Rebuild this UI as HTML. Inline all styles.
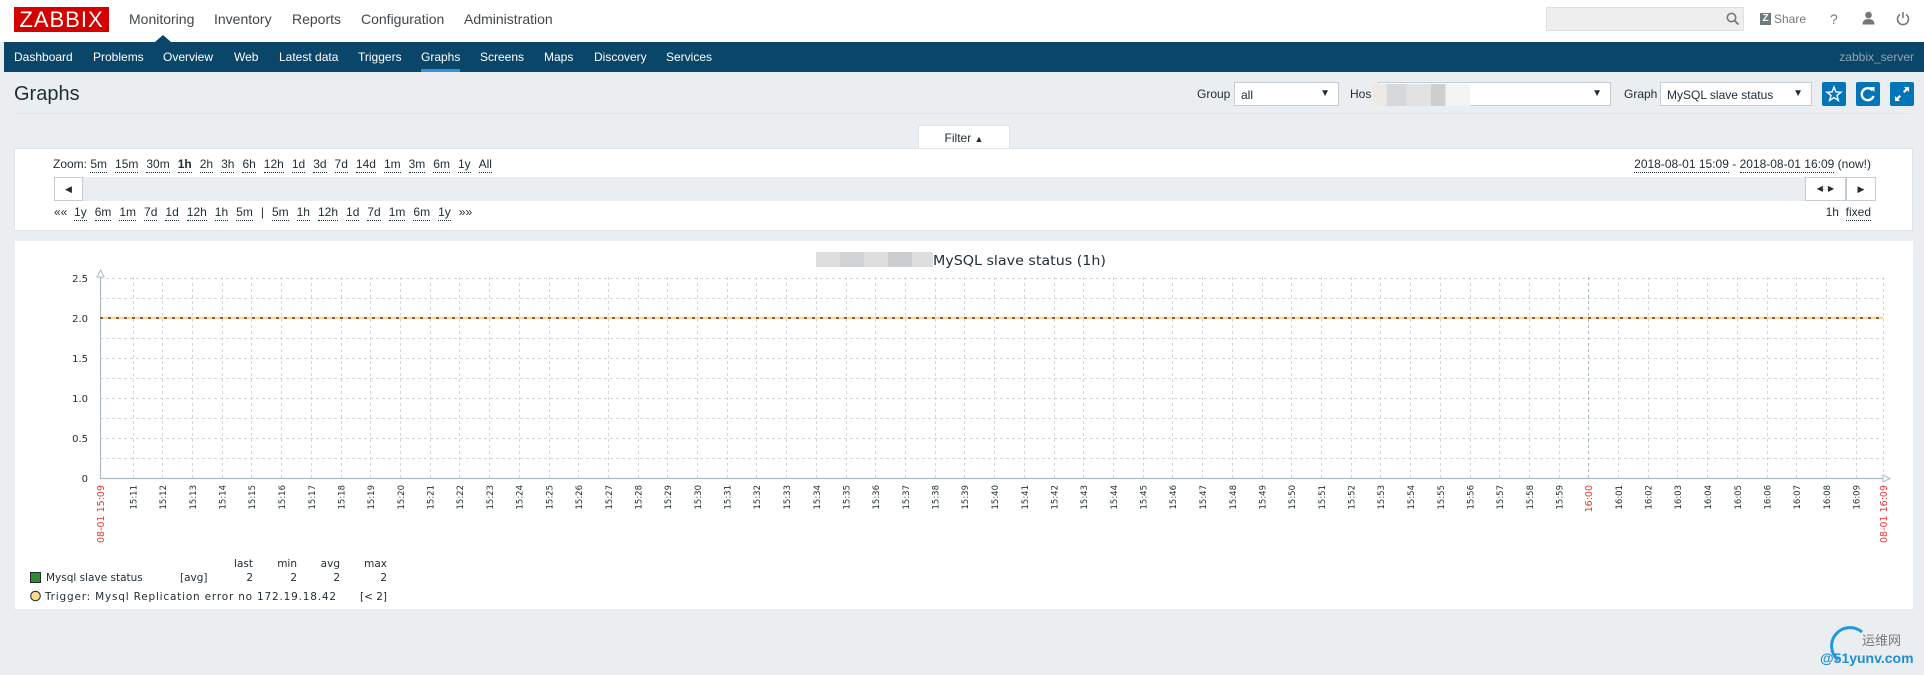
<!DOCTYPE html>
<html><head><meta charset="utf-8"><style>
*{margin:0;padding:0;box-sizing:border-box}
body{width:1924px;height:675px;overflow:hidden;background:#ebeef0;font-family:"Liberation Sans",Arial,sans-serif;font-size:12px;color:#1f2c33;position:relative}
.a{position:absolute;white-space:nowrap}
.top{left:0;top:0;width:1924px;height:42px;background:#fff}
.nav{left:4px;top:42px;width:1920px;height:30px;background:#0a466a}
.nav span{position:absolute;top:8px;color:#fff;font-size:12px}
.mm{top:11px;font-size:14px;color:#40474c}
.sel{background:#fff;border:1px solid #c5cdd3;height:24px;top:82px;padding:5px 6px;font-size:12px}
.sel i{position:absolute;right:8px;top:5px;font-style:normal;font-size:10px}
.btn{top:82px;width:24px;height:24px;background:#0275b8;border-radius:2px}
.u{border-bottom:1px dotted #1f2c33;padding-bottom:1px}
.zl span{margin-right:8px}
</style></head><body>
<div class="a top"></div>
<div class="a" style="left:14px;top:7px;width:95px;height:25px;background:#d40000;color:#fff;font-size:22px;line-height:25px;text-align:center;letter-spacing:1px">ZABBIX</div>
<div class="a mm" style="left:129px">Monitoring</div>
<div class="a mm" style="left:214px">Inventory</div>
<div class="a mm" style="left:292px">Reports</div>
<div class="a mm" style="left:361px">Configuration</div>
<div class="a mm" style="left:464px">Administration</div>
<div class="a" style="left:155px;top:35px;width:0;height:0;border-left:8px solid transparent;border-right:8px solid transparent;border-bottom:7px solid #0a466a"></div>
<div class="a" style="left:1546px;top:7px;width:198px;height:24px;background:#eee;border:1px solid #e0e0e0"></div>
<svg class="a" style="left:1726px;top:12px" width="14" height="14"><circle cx="5.5" cy="5.5" r="4.2" fill="none" stroke="#777" stroke-width="1.6"/><line x1="8.5" y1="8.5" x2="12.5" y2="12.5" stroke="#777" stroke-width="1.8"/></svg>
<div class="a" style="left:1760px;top:13px;width:11px;height:12px;background:#6f7a80;color:#fff;font-size:10px;font-weight:bold;text-align:center;line-height:12px">Z</div>
<div class="a" style="left:1774px;top:12px;color:#777;font-size:12px">Share</div>
<div class="a" style="left:1830px;top:11px;color:#777;font-size:14px">?</div>
<svg class="a" style="left:1862px;top:11px" width="13" height="14"><circle cx="6.5" cy="4" r="3.3" fill="#777"/><path d="M0.5 13.5 Q0.5 8 6.5 8 Q12.5 8 12.5 13.5Z" fill="#777"/></svg>
<svg class="a" style="left:1896px;top:11px" width="14" height="15"><path d="M4 3.5 A5.5 5.5 0 1 0 10 3.5" fill="none" stroke="#777" stroke-width="1.6"/><line x1="7" y1="1" x2="7" y2="7" stroke="#777" stroke-width="1.6"/></svg>

<div class="a nav">
<span style="left:10px">Dashboard</span><span style="left:89px">Problems</span><span style="left:159px">Overview</span><span style="left:230px">Web</span><span style="left:275px">Latest data</span><span style="left:354px">Triggers</span><span style="left:417px">Graphs</span><span style="left:476px">Screens</span><span style="left:540px">Maps</span><span style="left:590px">Discovery</span><span style="left:662px">Services</span>
<span style="right:10px;color:#93a3ad">zabbix_server</span>
<div style="position:absolute;left:417px;top:27px;width:39px;height:3px;background:#3b8fd5"></div>
</div>

<div class="a" style="left:14px;top:83px;font-size:20px">Graphs</div>
<div class="a" style="left:14px;top:113px;width:1896px;height:1px;background:#dfe4e7"></div>
<div class="a" style="left:1197px;top:87px">Group</div>
<div class="a sel" style="left:1234px;width:105px">all<i>▼</i></div>
<div class="a" style="left:1350px;top:87px">Hos</div>
<div class="a sel" style="left:1378px;width:233px"><i>▼</i></div>
<div class="a" style="left:1372px;top:84px;width:98px;height:22px;background:linear-gradient(90deg,#eceae6 0 15%,#d6d9dc 15% 35%,#e2e2e2 35% 60%,#cfcfcf 60% 75%,#f4f4f4 75%)"></div>
<div class="a" style="left:1624px;top:87px">Graph</div>
<div class="a sel" style="left:1660px;width:152px;color:#1f2c33">MySQL slave status<i>▼</i></div>
<div class="a btn" style="left:1822px"><svg width="24" height="24"><path d="M12 5 L13.9 10 L19 10.2 L15 13.4 L16.4 18.5 L12 15.6 L7.6 18.5 L9 13.4 L5 10.2 L10.1 10Z" fill="none" stroke="#fff" stroke-width="1.4"/></svg></div>
<div class="a btn" style="left:1856px"><svg width="24" height="24"><path d="M16.5 8.5 A6 6 0 1 0 17.5 14" fill="none" stroke="#fff" stroke-width="2.4"/><path d="M13.5 5 L18.5 5 L18.5 10Z" fill="#fff"/></svg></div>
<div class="a btn" style="left:1890px"><svg width="24" height="24"><path d="M14 5 H19 V10 L17.3 8.3 L14.5 11 L13 9.5 L15.7 6.7Z M10 19 H5 V14 L6.7 15.7 L9.5 13 L11 14.5 L8.3 17.3Z" fill="#fff"/></svg></div>

<div class="a" style="left:918px;top:125px;width:92px;height:24px;background:#fff;border:1px solid #dfe4e7;border-bottom:none;text-align:center;padding-top:5px">Filter <span style="font-size:9px">▲</span></div>
<div class="a" style="left:14px;top:148px;width:1899px;height:83px;background:#fff;border:1px solid #dfe4e7"></div>
<div class="a zl" style="left:53px;top:157px">Zoom: <span class="u">5m</span><span class="u">15m</span><span class="u">30m</span><span style="font-weight:bold" class="u">1h</span><span class="u">2h</span><span class="u">3h</span><span class="u">6h</span><span class="u">12h</span><span class="u">1d</span><span class="u">3d</span><span class="u">7d</span><span class="u">14d</span><span class="u">1m</span><span class="u">3m</span><span class="u">6m</span><span class="u">1y</span><span class="u">All</span></div>
<div class="a" style="right:53px;top:157px"><span class="u">2018-08-01 15:09</span> - <span class="u">2018-08-01 16:09</span> (now!)</div>
<div class="a" style="left:54px;top:177px;width:1822px;height:24px;background:#ebeef0"></div>
<div class="a" style="left:54px;top:177px;width:29px;height:24px;background:#fff;border:1px solid #c5cdd3;text-align:center;font-size:9px;line-height:22px">◀</div>
<div class="a" style="left:1805px;top:177px;width:41px;height:24px;background:#fff;border:1px solid #c5cdd3;text-align:center;font-size:8px;line-height:22px">◀<span style="color:#999">∷</span>▶</div>
<div class="a" style="left:1846px;top:177px;width:30px;height:24px;background:#fff;border:1px solid #c5cdd3;text-align:center;font-size:9px;line-height:22px">▶</div>
<div class="a zl" style="left:54px;top:205px">«« &nbsp;<span class="u">1y</span><span class="u">6m</span><span class="u">1m</span><span class="u">7d</span><span class="u">1d</span><span class="u">12h</span><span class="u">1h</span><span class="u">5m</span><span>|</span><span class="u">5m</span><span class="u">1h</span><span class="u">12h</span><span class="u">1d</span><span class="u">7d</span><span class="u">1m</span><span class="u">6m</span><span class="u">1y</span>»»</div>
<div class="a" style="right:53px;top:205px">1h &nbsp;<span class="u">fixed</span></div>

<div class="a" style="left:15px;top:241px;width:1898px;height:368px;background:#fff"></div>
<svg class="a" style="left:0;top:0" width="1924" height="675" font-family="DejaVu Sans, sans-serif">
<rect x="816" y="252" width="117" height="15" fill="#dedede"/><rect x="840" y="252" width="24" height="15" fill="#d0d2d4"/><rect x="888" y="252" width="24" height="15" fill="#cbcdcf"/>
<text x="933" y="265" font-size="13" fill="#1f2c33" textLength="173" lengthAdjust="spacingAndGlyphs">MySQL slave status (1h)</text>
<g stroke="#cfd8dc" stroke-width="1" stroke-dasharray="3,3">
<path d="M100 278.5H1883M100 298.5H1883M100 318.5H1883M100 338.5H1883M100 358.5H1883M100 378.5H1883M100 398.5H1883M100 418.5H1883M100 438.5H1883M100 458.5H1883"/>
<path d="M133.5 277V478M162.5 277V478M192.5 277V478M222.5 277V478M251.5 277V478M281.5 277V478M311.5 277V478M341.5 277V478M370.5 277V478M400.5 277V478M430.5 277V478M459.5 277V478M489.5 277V478M519.5 277V478M549.5 277V478M578.5 277V478M608.5 277V478M638.5 277V478M667.5 277V478M697.5 277V478M727.5 277V478M756.5 277V478M786.5 277V478M816.5 277V478M846.5 277V478M875.5 277V478M905.5 277V478M935.5 277V478M964.5 277V478M994.5 277V478M1024.5 277V478M1054.5 277V478M1083.5 277V478M1113.5 277V478M1143.5 277V478M1172.5 277V478M1202.5 277V478M1232.5 277V478M1262.5 277V478M1291.5 277V478M1321.5 277V478M1351.5 277V478M1380.5 277V478M1410.5 277V478M1440.5 277V478M1470.5 277V478M1499.5 277V478M1529.5 277V478M1559.5 277V478M1618.5 277V478M1648.5 277V478M1677.5 277V478M1707.5 277V478M1737.5 277V478M1767.5 277V478M1796.5 277V478M1826.5 277V478M1856.5 277V478M1883.5 277V478"/>
<path d="M1588.5 277V478" stroke="#a9b7bf"/>
</g>
<path d="M100.5 272V478.5H1883" stroke="#acbbc2" stroke-width="1.2" fill="none"/>
<path d="M97 277L100.5 270L104 277Z M1883 475L1890 478.5L1883 482Z" fill="#fff" stroke="#acbbc2"/>
<line x1="100" y1="318" x2="1883" y2="318" stroke="#ffd88a" stroke-width="2.5"/>
<line x1="100" y1="318" x2="1883" y2="318" stroke="#444" stroke-width="1.5" stroke-dasharray="3,5"/>
<g font-size="10" fill="#1f2c33" text-anchor="end">
<text x="88" y="282">2.5</text><text x="88" y="322">2.0</text><text x="88" y="362">1.5</text><text x="88" y="402">1.0</text><text x="88" y="442">0.5</text><text x="88" y="482">0</text>
</g>
<g font-size="8.5" fill="#1f2c33" text-anchor="end">
<text transform="translate(136.5,485) rotate(-90)">15:11</text><text transform="translate(166,485) rotate(-90)">15:12</text><text transform="translate(196,485) rotate(-90)">15:13</text><text transform="translate(225.5,485) rotate(-90)">15:14</text><text transform="translate(255,485) rotate(-90)">15:15</text><text transform="translate(285,485) rotate(-90)">15:16</text><text transform="translate(315,485) rotate(-90)">15:17</text><text transform="translate(344.5,485) rotate(-90)">15:18</text><text transform="translate(374,485) rotate(-90)">15:19</text><text transform="translate(404,485) rotate(-90)">15:20</text><text transform="translate(433.5,485) rotate(-90)">15:21</text><text transform="translate(463,485) rotate(-90)">15:22</text><text transform="translate(493,485) rotate(-90)">15:23</text><text transform="translate(522.5,485) rotate(-90)">15:24</text><text transform="translate(552.5,485) rotate(-90)">15:25</text><text transform="translate(582,485) rotate(-90)">15:26</text><text transform="translate(612,485) rotate(-90)">15:27</text><text transform="translate(641.5,485) rotate(-90)">15:28</text><text transform="translate(671,485) rotate(-90)">15:29</text><text transform="translate(701,485) rotate(-90)">15:30</text><text transform="translate(730.5,485) rotate(-90)">15:31</text><text transform="translate(760,485) rotate(-90)">15:32</text><text transform="translate(790,485) rotate(-90)">15:33</text><text transform="translate(820,485) rotate(-90)">15:34</text><text transform="translate(849.5,485) rotate(-90)">15:35</text><text transform="translate(879,485) rotate(-90)">15:36</text><text transform="translate(909,485) rotate(-90)">15:37</text><text transform="translate(938.5,485) rotate(-90)">15:38</text><text transform="translate(968,485) rotate(-90)">15:39</text><text transform="translate(998,485) rotate(-90)">15:40</text><text transform="translate(1028,485) rotate(-90)">15:41</text><text transform="translate(1057.5,485) rotate(-90)">15:42</text><text transform="translate(1087,485) rotate(-90)">15:43</text><text transform="translate(1117,485) rotate(-90)">15:44</text><text transform="translate(1146.5,485) rotate(-90)">15:45</text><text transform="translate(1176,485) rotate(-90)">15:46</text><text transform="translate(1206,485) rotate(-90)">15:47</text><text transform="translate(1236,485) rotate(-90)">15:48</text><text transform="translate(1265.5,485) rotate(-90)">15:49</text><text transform="translate(1295,485) rotate(-90)">15:50</text><text transform="translate(1325,485) rotate(-90)">15:51</text><text transform="translate(1354.5,485) rotate(-90)">15:52</text><text transform="translate(1384,485) rotate(-90)">15:53</text><text transform="translate(1414,485) rotate(-90)">15:54</text><text transform="translate(1444,485) rotate(-90)">15:55</text><text transform="translate(1473.5,485) rotate(-90)">15:56</text><text transform="translate(1503,485) rotate(-90)">15:57</text><text transform="translate(1533,485) rotate(-90)">15:58</text><text transform="translate(1562.5,485) rotate(-90)">15:59</text><text transform="translate(1622,485) rotate(-90)">16:01</text><text transform="translate(1651.5,485) rotate(-90)">16:02</text><text transform="translate(1681,485) rotate(-90)">16:03</text><text transform="translate(1711,485) rotate(-90)">16:04</text><text transform="translate(1741,485) rotate(-90)">16:05</text><text transform="translate(1770.5,485) rotate(-90)">16:06</text><text transform="translate(1800,485) rotate(-90)">16:07</text><text transform="translate(1830,485) rotate(-90)">16:08</text><text transform="translate(1859.5,485) rotate(-90)">16:09</text>
</g>
<g font-size="9.5" fill="#e33" text-anchor="end">
<text transform="translate(1592,485) rotate(-90)">16:00</text>
<text transform="translate(104,485) rotate(-90)">08-01 15:09</text>
<text transform="translate(1887,485) rotate(-90)">08-01 16:09</text>
</g>
<g font-size="10.5" fill="#1f2c33">
<g text-anchor="end"><text x="253" y="567">last</text><text x="297" y="567">min</text><text x="340" y="567">avg</text><text x="387" y="567">max</text>
<text x="253" y="581">2</text><text x="297" y="581">2</text><text x="340" y="581">2</text><text x="387" y="581">2</text></g>
<rect x="30.5" y="572.5" width="10" height="10" fill="#2e8b2e" stroke="#1f2c33"/>
<text x="46" y="581">Mysql slave status</text><text x="180" y="581">[avg]</text>
<circle cx="35.5" cy="596" r="4.8" fill="#ffd88a" stroke="#1f2c33"/>
<text x="45" y="600" textLength="291">Trigger: Mysql Replication error no 172.19.18.42</text><text x="360" y="600">[&lt; 2]</text>
</g>
<path d="M1838 660 A16 16 0 0 1 1862 632" fill="none" stroke="#1e9be0" stroke-width="3"/>
<text x="1862" y="645" font-family="Liberation Sans, Noto Sans CJK SC, sans-serif" font-size="13" fill="#777">运维网</text>
<text x="1820" y="663" font-family="Liberation Sans, sans-serif" font-size="14" font-weight="bold" fill="#1e8fd6">@51yunv.com</text>
</svg>
</body></html>
